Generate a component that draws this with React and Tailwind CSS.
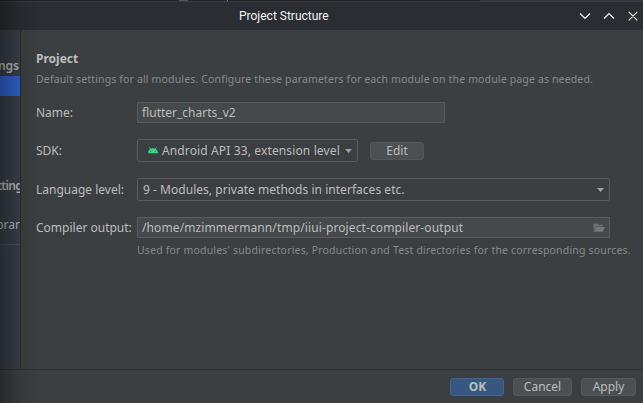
import React from "react";

const FONT = "font-['Noto_Sans',sans-serif]";

function Button({ className, children }) {
  return (
    <button
      className={`flex h-[18px] shrink-0 items-center justify-center rounded-[3px] border text-[12px] leading-none ${className}`}
    >
      {children}
    </button>
  );
}

function Row({ label, className, children }) {
  return (
    <div className={`flex items-center ${className}`}>
      <span className="w-[101px] shrink-0 whitespace-nowrap text-[12px] leading-none">{label}</span>
      {children}
    </div>
  );
}

function Caret() {
  return (
    <svg width="7" height="4" viewBox="0 0 7 4" className="shrink-0">
      <path d="M0 0h7L3.5 4z" fill="#a0a2a4" />
    </svg>
  );
}

function Android() {
  return (
    <svg width="10" height="7" viewBox="0 0 10 7" className="shrink-0">
      <path d="M1.5 0.3L2.6 1.9M8.5 0.3L7.4 1.9" stroke="#3ddc84" strokeWidth="0.9" />
      <path d="M0 6.2C0.3 3 2.3 1.2 5 1.2S9.7 3 10 6.2z" fill="#3ddc84" />
      <circle cx="2.8" cy="4.2" r="0.6" fill="#2c6b48" />
      <circle cx="7.2" cy="4.2" r="0.6" fill="#2c6b48" />
    </svg>
  );
}

function Folder() {
  return (
    <svg width="12" height="9" viewBox="0 0 12 9" className="shrink-0">
      <path d="M0.5 0.5h4l1.2 1.3H10V3.4H2.5L0.5 7.6z" fill="#697074" />
      <path d="M2.8 4.1H12L9.8 8.7H0.5z" fill="#6f777b" />
    </svg>
  );
}

function TitleBar() {
  return (
    <header className="flex h-[30px] shrink-0 flex-col bg-[#2a2d32]">
      <div className="flex h-px shrink-0 bg-[#202224]">
        <div className="ml-[179px] h-px w-[9px] bg-[#55585a]" />
        <div className="ml-[39px] h-px w-px bg-[#4a72bd]" />
        <div className="ml-auto h-px w-[163px] bg-[#323638]" />
      </div>
      <div className="h-px shrink-0 bg-[#3a3d40]" />
      <div className="flex grow items-center pb-px">
        <h1 className="ml-[239px] w-[340px] whitespace-nowrap font-['Roboto',sans-serif] text-[12px] font-normal leading-none text-[#f4f4f4]">
          Project Structure
        </h1>
        <svg width="60" height="10" viewBox="0 0 60 10" fill="none" stroke="#f5f5f5" strokeWidth="1.2">
          <path d="M1 2.5l5 5 5-5M25 7.5l5-5 5 5M49.7 0.8l8.6 8.6M58.3 0.8l-8.6 8.6" />
        </svg>
      </div>
    </header>
  );
}

function Sidebar() {
  return (
    <aside className="flex w-[21px] shrink-0 flex-col items-end overflow-hidden border-r border-[#2b2d2e] bg-[#3a404a] text-[12px] leading-none">
      <div className="mt-[30px] mr-px h-4 font-semibold">Settings</div>
      <div className="h-5 w-full shrink-0 bg-[#3064cf]" />
      <div className="mt-[84px] mr-[-2px] h-4 font-semibold tracking-[-0.7px]">Setting</div>
      <div className="mt-[23px] h-4">Librar</div>
      <div className="mt-[9px] h-px w-full shrink-0 bg-[#4f5152]" />
    </aside>
  );
}

export default function App() {
  return (
    <div className={`relative flex h-[403px] w-[643px] flex-col overflow-hidden bg-[#3c3f41] text-[#bcbdbe] ${FONT}`}>
      <TitleBar />
      <main className="flex h-[339px] shrink-0">
        <Sidebar />
        <section className="flex flex-col pl-[15px]">
          <h2 className="mt-[22px] text-[12px] font-bold leading-[14px]">Project</h2>
          <p className="mt-[7px] whitespace-nowrap text-[10.5px] leading-[12px] tracking-[0.15px] text-[#87898a]">
            Default settings for all modules. Configure these parameters for each module on the module page as needed.
          </p>
          <Row label="Name:" className="mt-[17px] h-[21px]">
            <div className="flex h-full w-[308px] items-center border border-[#595c5d] bg-[#45494a] pl-1 text-[12px] leading-none">
              flutter_charts_v2
            </div>
          </Row>
          <Row label="SDK:" className="mt-4 h-[23px]">
            <div className="flex h-full w-[221px] items-center rounded-[2px] border border-[#595c5d] pl-[10px] pr-[5px] text-[12px] leading-none">
              <Android />
              <span className="ml-[4px] grow whitespace-nowrap tracking-[0.13px]">Android API 33, extension level</span>
              <Caret />
            </div>
            <Button className="ml-3 w-[54px] border-[#55595b] bg-[#4c5052]">Edit</Button>
          </Row>
          <Row label="Language level:" className="mt-4 h-[23px]">
            <div className="flex h-full w-[473px] items-center rounded-[2px] border border-[#595c5d] pl-[5px] pr-[5px] text-[12px] leading-none">
              <span className="grow whitespace-nowrap tracking-[0.03px]">9 - Modules, private methods in interfaces etc.</span>
              <Caret />
            </div>
          </Row>
          <Row label="Compiler output:" className="mt-4 h-[21px]">
            <div className="flex h-full w-[473px] items-center border border-[#595c5d] bg-[#45494a] pl-1 pr-1 text-[12px] leading-none">
              <span className="grow whitespace-nowrap tracking-[0.11px]">/home/mzimmermann/tmp/iiui-project-compiler-output</span>
              <Folder />
            </div>
          </Row>
          <p className="mt-[6px] ml-[101px] whitespace-nowrap text-[10.5px] leading-[12px] tracking-[0.18px] text-[#87898a]">
            Used for modules' subdirectories, Production and Test directories for the corresponding sources.
          </p>
        </section>
      </main>
      <footer className="flex grow justify-end gap-[9px] border-t border-[#2f3233] pt-2 pr-[7px]">
        <Button className="w-[54px] border-[#41658f] bg-[#365880] pl-px font-bold">OK</Button>
        <Button className="w-[59px] border-[#55595b] bg-[#4c5052]">Cancel</Button>
        <Button className="w-[55px] border-[#55595b] bg-[#4c5052]">Apply</Button>
      </footer>
      <div className="pointer-events-none absolute inset-y-0 left-0 w-[45px] bg-linear-to-r from-black/35 via-black/8 to-transparent" />
    </div>
  );
}
